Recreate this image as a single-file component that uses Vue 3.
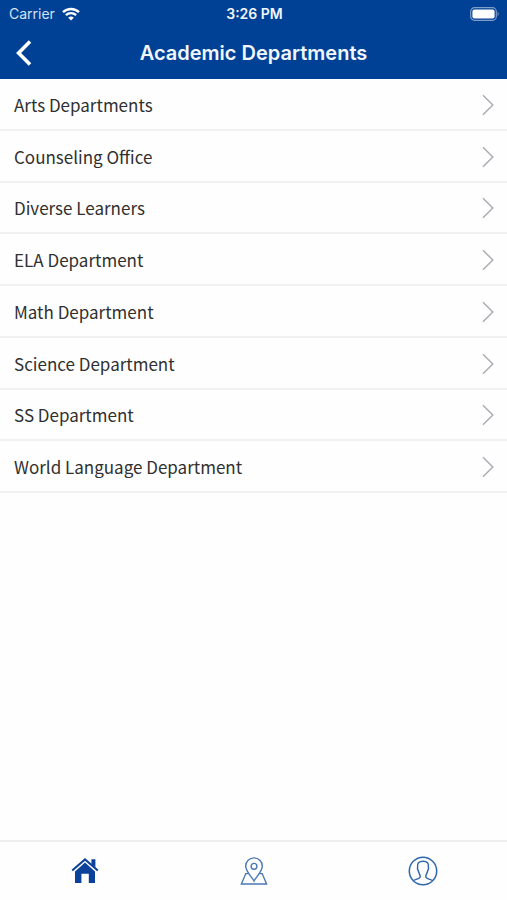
<template>
  <div class="app">
    <header class="header">
      <div class="status-bar">
        <div class="carrier">
          <span>Carrier</span>
          <svg class="wifi" viewBox="0 0 18 14" aria-hidden="true">
            <path d="M1 5.2 A11.5 11.5 0 0 1 17 5.2" />
            <path d="M3.9 8.2 A7.4 7.4 0 0 1 14.1 8.2" />
            <path class="wifi-dot" d="M9 13.6 L6.2 10.8 A4 4 0 0 1 11.8 10.8 Z" />
          </svg>
        </div>
        <span class="time">3:26 PM</span>
        <svg class="battery" viewBox="0 0 30 14" aria-hidden="true">
          <rect class="battery-shell" x="0.7" y="0.7" width="25.6" height="12.6" rx="3.8" />
          <rect class="battery-level" x="2.4" y="2.4" width="22.2" height="9.2" rx="2" />
          <path class="battery-tip" d="M27.6 4.8 Q29.8 7 27.6 9.2 Z" />
        </svg>
      </div>
      <div class="nav-bar">
        <button class="back" type="button" aria-label="Back">
          <svg viewBox="0 0 16 26" aria-hidden="true">
            <path d="M14 1.5 L2.6 13 L14 24.5" />
          </svg>
        </button>
        <h1 class="title">Academic Departments</h1>
      </div>
    </header>

    <main class="content">
      <ul class="list">
        <li v-for="item in departments" :key="item">
          <a class="row" href="#">
            <span>{{ item }}</span>
            <svg class="chevron" viewBox="0 0 12 22" aria-hidden="true">
              <path d="M1 1.2 L10.8 11 L1 20.8" />
            </svg>
          </a>
        </li>
      </ul>
    </main>

    <nav class="tab-bar">
      <button class="tab" type="button" aria-label="Home">
        <svg class="home" viewBox="0 0 28 26" aria-hidden="true">
          <path d="M20.4 1.2 H24.4 V9.6 L20.4 6 Z" />
          <path d="M4 13.4 L14 4.6 L24 13.4 V25 H17.8 V15.8 H10.4 V25 H4 Z" />
          <path class="roof" d="M1.2 12.6 L14 1.4 L26.8 12.6" />
        </svg>
      </button>
      <button class="tab" type="button" aria-label="Map">
        <svg class="map" viewBox="0 0 28 28" aria-hidden="true">
          <path d="M14 24 C12.4 20.4 5.7 14.6 5.7 9.2 A8.3 8.3 0 0 1 22.3 9.2 C22.3 14.6 15.6 20.4 14 24 Z" />
          <circle cx="14" cy="9.3" r="2.9" />
          <path d="M8.4 16.6 H5.8 L1.4 27 H26.6 L22.2 16.6 H19.6" />
        </svg>
      </button>
      <button class="tab" type="button" aria-label="Profile">
        <svg class="profile" viewBox="0 0 30 30" aria-hidden="true">
          <circle cx="15" cy="15" r="13.7" />
          <path
            d="M5.4 24.6 C7.4 23.2 12 23 12.2 20.8 C12.3 19.4 11.8 18.4 11.2 17.4 C10.6 16.2 10.4 15.2 10.1 14.2 C9.4 13.4 9.3 12.2 9.6 11.2 C9 7.4 10.8 5.2 15 5.2 C19.2 5.2 21 7.4 20.4 11.2 C20.7 12.2 20.6 13.4 19.9 14.2 C19.6 15.2 19.4 16.2 18.8 17.4 C18.2 18.4 17.7 19.4 17.8 20.8 C18 23 22.6 23.2 24.6 24.6"
          />
        </svg>
      </button>
    </nav>
  </div>
</template>

<script setup>
const departments = [
  'Arts Departments',
  'Counseling Office',
  'Diverse Learners',
  'ELA Department',
  'Math Department',
  'Science Department',
  'SS Department',
  'World Language Department',
]
</script>

<style>
body {
  margin: 0;
  background: #fefefe;
}
</style>

<style scoped>
.app {
  display: flex;
  flex-direction: column;
  min-height: 100vh;
  font-family: Inter, "Liberation Sans", sans-serif;
}
svg {
  display: block;
  fill: none;
}
button {
  padding: 0;
  border: none;
  background: none;
  cursor: pointer;
}
.header {
  background: #004195;
  color: #f2f7ff;
}
.status-bar {
  display: grid;
  grid-template-columns: 1fr auto 1fr;
  align-items: center;
  height: 27px;
  padding: 0 7px 0 9px;
  font-size: 14px;
}
.carrier {
  display: flex;
  align-items: center;
  gap: 7px;
  color: #d5e2f5;
}
.wifi {
  width: 18px;
  height: 14px;
  stroke: #fff;
  stroke-width: 2.4;
}
.wifi-dot {
  fill: #fff;
  stroke: none;
}
.time {
  font-weight: 600;
}
.battery {
  justify-self: end;
  width: 30px;
  height: 14px;
}
.battery-shell {
  stroke: #7f9fcb;
  stroke-width: 1.2;
}
.battery-level {
  fill: #fff;
}
.battery-tip {
  fill: #7f9fcb;
}
.nav-bar {
  display: grid;
  grid-template-columns: 48px 1fr 48px;
  align-items: center;
  height: 52px;
}
.back {
  display: flex;
  align-items: center;
  justify-content: center;
  height: 48px;
}
.back svg {
  width: 16px;
  height: 26px;
  stroke: #fff;
  stroke-width: 3.6;
}
.title {
  margin: 0;
  font-size: 20px;
  font-weight: 600;
  text-align: center;
}
.content {
  flex: 1;
}
.list {
  display: grid;
  grid-auto-rows: 1fr;
  min-height: 46vh;
  margin: 0;
  padding: 0;
  list-style: none;
}
.list li {
  display: flex;
  border-bottom: 2px solid #f1f1f2;
}
.row {
  flex: 1;
  display: flex;
  align-items: center;
  justify-content: space-between;
  padding: 2px 13px 0 14px;
  color: #303030;
  font-family: "Noto Sans CJK SC", "Noto Sans", sans-serif;
  font-size: 17px;
  line-height: 24px;
  text-decoration: none;
}
.chevron {
  width: 12px;
  height: 22px;
  stroke: #a9adb3;
  stroke-width: 1.5;
}
.tab-bar {
  display: grid;
  grid-template-columns: repeat(3, 1fr);
  height: 58px;
  border-top: 2px solid #eeeeef;
}
.tab {
  display: flex;
  align-items: center;
  justify-content: center;
}
.home {
  width: 28px;
  height: 26px;
  fill: #0b419a;
}
.home .roof {
  fill: none;
  stroke: #0b419a;
  stroke-width: 2;
}
.map {
  width: 28px;
  height: 28px;
  stroke: #4a78b5;
  stroke-width: 1.4;
}
.profile {
  width: 30px;
  height: 30px;
  stroke: #2f68ad;
  stroke-width: 1.5;
}
</style>
